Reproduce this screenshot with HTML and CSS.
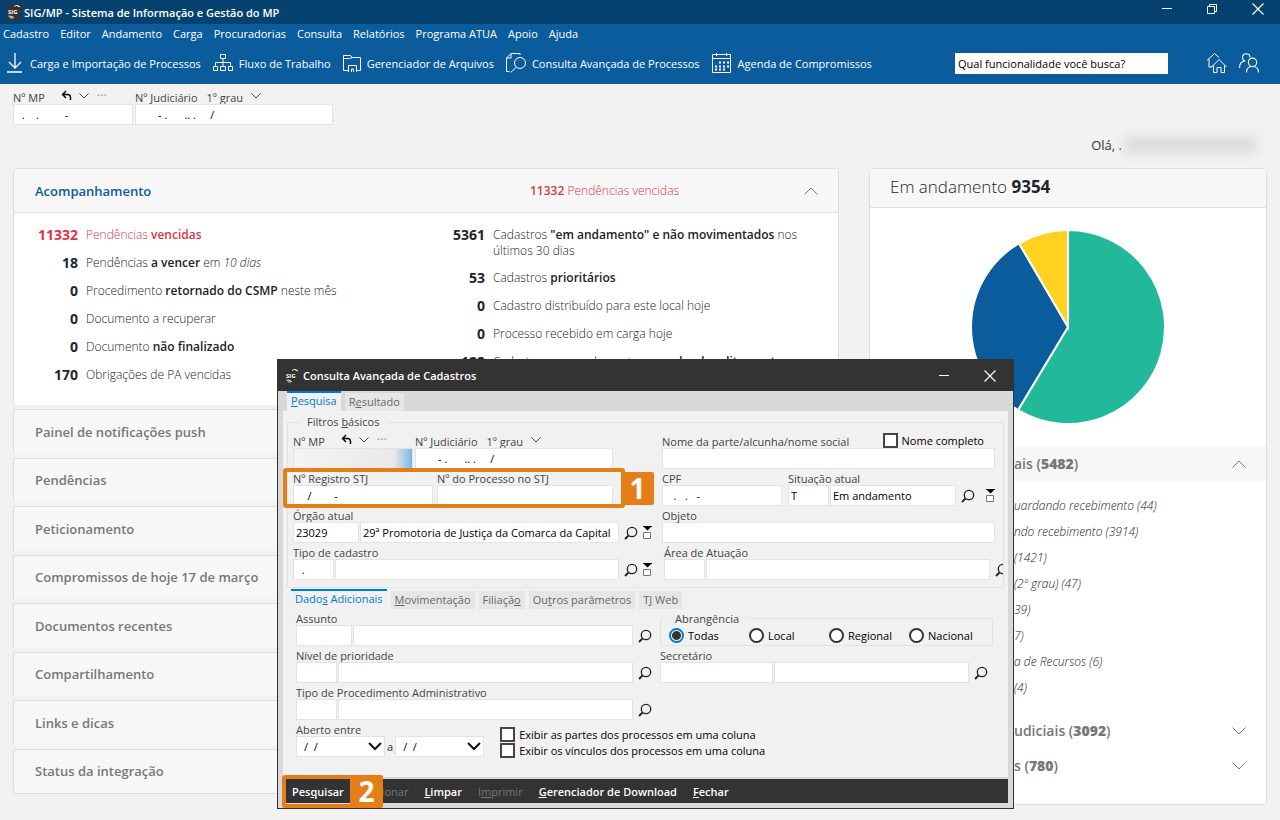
FILE: index.html
```html
<!DOCTYPE html>
<html lang="pt-BR">
<head>
    <meta charset="UTF-8">
    <meta name="viewport" content="width=device-width, initial-scale=1.0">
    <title>SIG/MP - Sistema de Informação e Gestão do MP</title>
    <link rel="stylesheet" href="styles.css">
</head>
<body>
    <svg class="sprite" aria-hidden="true">
        <symbol id="logo" viewBox="0 0 14 16">
            <text x="1" y="10" class="logo-text">SIG</text>
            <path d="M7 2.5c2-1.5 4.500-1.500 5.500.5M10 1.500l3 1.500M2 11.500c0 2.500 3 3.500 5 1.500M3 12l3 1" fill="none" stroke="#eee"/>
        </symbol>
        <symbol id="undo" viewBox="0 0 11 11">
            <path d="M5 1L1.500 4.500 5 8M1.500 4.500h5q3 0 3 3v2.500" fill="none" stroke="#000" stroke-width="1.400"/>
        </symbol>
        <symbol id="down" viewBox="0 0 10 6">
            <path d="M.5.5L5 5 9.500.5" fill="none" stroke="currentColor"/>
        </symbol>
        <symbol id="up" viewBox="0 0 14 8">
            <path d="M.5 7.500L7 1l6.500 6.500" fill="none" stroke="currentColor"/>
        </symbol>
        <symbol id="fold-down" viewBox="0 0 14 8">
            <path d="M.5.5L7 7l6.500-6.500" fill="none" stroke="currentColor"/>
        </symbol>
        <symbol id="combo" viewBox="0 0 14 9">
            <path d="M1 1l6 6 6-6" fill="none" stroke="#111" stroke-width="2"/>
        </symbol>
        <symbol id="lens" viewBox="0 0 14 14">
            <path d="M4.500 9.500L1 13" fill="none" stroke="#222" stroke-width="1.800"/>
            <circle cx="8" cy="6" r="4.700" fill="none" stroke="#222" stroke-width="1.300"/>
        </symbol>
        <symbol id="pick" viewBox="0 0 9 13">
            <path d="M0 0h9v1H8L4.500 4.500 1 1H0z" fill="#000"/>
            <path d="M.5 6.500h7v6h-7z" fill="#fff" stroke="#777"/>
        </symbol>
        <symbol id="close" viewBox="0 0 12 12">
            <path d="M.5.5l11 11M11.500.5l-11 11" fill="none" stroke="#fff" stroke-width="1.200"/>
        </symbol>
        <symbol id="minimize" viewBox="0 0 10 12">
            <path d="M0 5.500h10" stroke="#fff"/>
        </symbol>
    </svg>

    <header>
        <div class="titlebar">
            <svg class="app-logo" width="14" height="16"><use href="#logo"/></svg>
            <h1>SIG/MP - Sistema de Informação e Gestão do MP</h1>
            <button class="win-btn" aria-label="Minimizar"><svg width="10" height="12"><use href="#minimize"/></svg></button>
            <button class="win-btn" aria-label="Restaurar">
                <svg width="10" height="12" viewBox="0 0 10 12" fill="none" stroke="#fff"><path d="M.5 3.500h7v7h-7zM2.500 3.500v-2h7v7h-2"/></svg>
            </button>
            <button class="win-btn" aria-label="Fechar janela"><svg width="12" height="12"><use href="#close"/></svg></button>
        </div>
        <nav class="menu">
            <a href="#">Cadastro</a>
            <a href="#">Editor</a>
            <a href="#">Andamento</a>
            <a href="#">Carga</a>
            <a href="#">Procuradorias</a>
            <a href="#">Consulta</a>
            <a href="#">Relatórios</a>
            <a href="#">Programa ATUA</a>
            <a href="#">Apoio</a>
            <a href="#">Ajuda</a>
        </nav>
        <div class="toolbar">
            <button class="tool">
                <svg class="wide" width="16" height="20" viewBox="0 0 16 20" fill="none" stroke="#fff" stroke-width="1.300"><path d="M8 0v15M2 9l6 6 6-6M0 19h15"/></svg>
                Carga e Importação de Processos
            </button>
            <button class="tool">
                <svg width="20" height="18" viewBox="0 0 20 18" fill="none" stroke="#fff"><path d="M7.500.5h5v4h-5zM10 4.500v8M2.500 12V8.500h15V12M.5 12.500h4v4h-4zM7.500 12.500h5v4h-5zM15.500 12.500h4v4h-4z"/></svg>
                Fluxo de Trabalho
            </button>
            <button class="tool">
                <svg width="18" height="19" viewBox="0 0 18 19" fill="none" stroke="#fff"><path d="M5 16.500H.5V1.500h7l2 2h8v13H14M.5 4.500h6l3-1M5.500 18v-6.500h8V18M8.500 18v-3h2v3"/></svg>
                Gerenciador de Arquivos
            </button>
            <button class="tool">
                <svg width="20" height="20" viewBox="0 0 20 20" fill="none" stroke="#fff"><path d="M3.500 18.500h-3V5L5 .5h9V2M.5 5H5V.5M10 14.500L4.500 19.500"/><circle cx="14" cy="10" r="5.500"/></svg>
                Consulta Avançada de Processos
            </button>
            <button class="tool">
                <svg width="20" height="20" viewBox="0 0 20 20" fill="none" stroke="#fff"><path d="M.5 1.500h18v18H.5zM.5 5.500h18M4.500 0v3M14.500 0v3"/><path d="M7 9.500h10M3 13.500h14M3 16.500h10" stroke-width="2" stroke-dasharray="2 2"/></svg>
                Agenda de Compromissos
            </button>
            <input class="search" type="text" aria-label="Qual funcionalidade você busca?" value="Qual funcionalidade você busca?">
            <button class="tool" aria-label="Início">
                <svg width="20" height="20" viewBox="0 0 20 20" fill="none" stroke="#fff"><path d="M0 7.500L7.500.5l4.500 4M2 6v8h3M4.500 14l7.500-7.500 7.500 7.500M6.500 12.500v7h3.500v-5h4v5h3.500v-7"/></svg>
            </button>
            <button class="tool" aria-label="Usuários">
                <svg width="21" height="20" viewBox="0 0 21 20" fill="none" stroke="#fff" stroke-width="1.100"><path d="M.5 15c0-4 2-6.500 5-7C2 5.500 3.500.8 7 .8c2.500 0 4 1.700 4 3.700M7.500 19.500c0-4 2.500-6 6-6s6 2 6 6"/><circle cx="13.500" cy="9.300" r="4.200"/></svg>
            </button>
        </div>
    </header>

    <main>
        <div class="numbers">
            <div class="field w-mp">
                <div class="label">
                    <label for="top-mp">Nº MP</label>
                    <svg class="undo" width="11" height="11"><use href="#undo"/></svg>
                    <svg width="10" height="6"><use href="#down"/></svg>
                    <span class="dots">···</span>
                </div>
                <input id="top-mp" type="text" value="  .    .         -">
            </div>
            <div class="field w-jud">
                <div class="label">
                    <label for="top-jud">Nº Judiciário</label>
                    <span class="grau"><select aria-label="Grau"><option>1º grau</option></select><svg width="10" height="6"><use href="#down"/></svg></span>
                </div>
                <input id="top-jud" type="text" value="       - .      .. .     /">
            </div>
        </div>
        <p class="greeting">Olá, . <span class="redacted"></span></p>

        <div class="columns">
            <div class="left">
                <section class="panel follow">
                    <div class="panel-head">
                        <h2>Acompanhamento</h2>
                        <span class="overdue"><strong>11332</strong> Pendências vencidas</span>
                        <svg width="14" height="8"><use href="#up"/></svg>
                    </div>
                    <div class="stats">
                        <ul>
                            <li class="late"><b>11332</b><span>Pendências <strong>vencidas</strong></span></li>
                            <li><b>18</b><span>Pendências <strong>a vencer</strong> em <em>10 dias</em></span></li>
                            <li><b>0</b><span>Procedimento <strong>retornado do CSMP</strong> neste mês</span></li>
                            <li><b>0</b><span>Documento a recuperar</span></li>
                            <li><b>0</b><span>Documento <strong>não finalizado</strong></span></li>
                            <li><b>170</b><span>Obrigações de PA vencidas</span></li>
                        </ul>
                        <ul>
                            <li><b>5361</b><span>Cadastros <strong>"em andamento" e não movimentados</strong> nos últimos 30 dias</span></li>
                            <li><b>53</b><span>Cadastros <strong>prioritários</strong></span></li>
                            <li><b>0</b><span>Cadastro distribuído para este local hoje</span></li>
                            <li><b>0</b><span>Processo recebido em carga hoje</span></li>
                            <li><b>122</b><span>Cadastros sem andamento <strong>aguardando aditamento</strong></span></li>
                        </ul>
                    </div>
                </section>
                <a class="fold" href="#">Painel de notificações push</a>
                <a class="fold" href="#">Pendências</a>
                <a class="fold" href="#">Peticionamento</a>
                <a class="fold" href="#">Compromissos de hoje 17 de março</a>
                <a class="fold" href="#">Documentos recentes</a>
                <a class="fold" href="#">Compartilhamento</a>
                <a class="fold" href="#">Links e dicas</a>
                <a class="fold" href="#">Status da integração</a>
            </div>

            <section class="panel progress">
                <h2>Em andamento <b>9354</b></h2>
                <svg class="pie" width="194" height="194" viewBox="-97 -97 194 194" stroke="#fff" stroke-width="2">
                    <path d="M0 0V-97A97 97 0 1 1-50 83.100z" fill="#22b99b"/>
                    <path d="M0 0L-50 83.100A97 97 0 0 1-49 -83.700z" fill="#0b5c9d"/>
                    <path d="M0 0L-49 -83.700A97 97 0 0 1 0-97z" fill="#ffd220"/>
                </svg>
                <div class="group open"><h3>ais (<b>5482</b>)</h3><svg width="14" height="8"><use href="#up"/></svg></div>
                <ul class="places">
                    <li>uardando recebimento (44)</li>
                    <li>ndo recebimento (3914)</li>
                    <li>(1421)</li>
                    <li>(2º grau) (47)</li>
                    <li>39)</li>
                    <li>7)</li>
                    <li>a de Recursos (6)</li>
                    <li>(4)</li>
                </ul>
                <div class="group"><h3>udiciais (<b>3092</b>)</h3><svg width="14" height="8"><use href="#fold-down"/></svg></div>
                <div class="group"><h3>s (<b>780</b>)</h3><svg width="14" height="8"><use href="#fold-down"/></svg></div>
            </section>
        </div>
    </main>

    <form class="dialog" role="dialog" aria-labelledby="dialog-title">
        <div class="dialog-title">
            <svg width="14" height="16"><use href="#logo"/></svg>
            <h2 id="dialog-title">Consulta Avançada de Cadastros</h2>
            <button type="button" class="win-btn" aria-label="Minimizar consulta"><svg width="10" height="12"><use href="#minimize"/></svg></button>
            <button type="button" class="win-btn" aria-label="Fechar consulta"><svg width="12" height="12"><use href="#close"/></svg></button>
        </div>
        <div class="dialog-frame">
            <div class="tabs top-tabs">
                <button type="button" class="tab active"><u>P</u>esquisa</button>
                <button type="button" class="tab">R<u>e</u>sultado</button>
            </div>
            <div class="dialog-body">
                <fieldset class="basic">
                    <legend>Filtros <u>b</u>ásicos</legend>
                    <div class="filters">
                        <div class="row tight">
                            <div class="field w-mp">
                                <div class="label">
                                    <label for="mp">Nº MP</label>
                                    <svg class="undo" width="11" height="11"><use href="#undo"/></svg>
                                    <svg width="10" height="6"><use href="#down"/></svg>
                                    <span class="dots">···</span>
                                </div>
                                <input id="mp" class="masked" type="text">
                            </div>
                            <div class="field w-jud">
                                <div class="label">
                                    <label for="jud">Nº Judiciário</label>
                                    <span class="grau"><select aria-label="Grau do processo"><option>1º grau</option></select><svg width="10" height="6"><use href="#down"/></svg></span>
                                </div>
                                <input id="jud" type="text" value="       - .      .. .     /">
                            </div>
                        </div>
                        <div class="field">
                            <div class="label">
                                <label for="nome">Nome da parte/alcunha/nome social</label>
                                <label class="check full-name"><input type="checkbox">Nome completo</label>
                            </div>
                            <input id="nome" type="text">
                        </div>

                        <div class="row">
                            <div class="field w-stj">
                                <label class="label" for="reg">Nº Registro STJ</label>
                                <input id="reg" type="text" value="    /        -">
                            </div>
                            <div class="field w-proc">
                                <label class="label" for="proc">Nº do Processo no STJ</label>
                                <input id="proc" type="text">
                            </div>
                        </div>
                        <div class="row situation">
                            <div class="field w-mp">
                                <label class="label" for="cpf">CPF</label>
                                <input id="cpf" type="text" value="   .   .   -">
                            </div>
                            <div class="field grow">
                                <label class="label" for="sit">Situação atual</label>
                                <div class="inputs">
                                    <input id="sit" class="code" type="text" value="T">
                                    <input type="text" aria-label="Descrição da situação" value="Em andamento">
                                    <button type="button" class="icon" aria-label="Buscar situação"><svg width="14" height="14"><use href="#lens"/></svg></button>
                                    <button type="button" class="icon last" aria-label="Listar situações"><svg width="9" height="13"><use href="#pick"/></svg></button>
                                </div>
                            </div>
                        </div>

                        <div class="field">
                            <label class="label" for="orgao">Órgão atual</label>
                            <div class="inputs">
                                <input id="orgao" class="code-wide" type="text" value="23029">
                                <input type="text" aria-label="Nome do órgão" value="29ª Promotoria de Justiça da Comarca da Capital">
                                <button type="button" class="icon" aria-label="Buscar órgão"><svg width="14" height="14"><use href="#lens"/></svg></button>
                                <button type="button" class="icon" aria-label="Listar órgãos"><svg width="9" height="13"><use href="#pick"/></svg></button>
                            </div>
                        </div>
                        <div class="field">
                            <label class="label" for="objeto">Objeto</label>
                            <input id="objeto" type="text">
                        </div>

                        <div class="field">
                            <label class="label" for="tipo">Tipo de cadastro</label>
                            <div class="inputs">
                                <input id="tipo" class="code" type="text" value="  .">
                                <input type="text" aria-label="Descrição do tipo">
                                <button type="button" class="icon" aria-label="Buscar tipo"><svg width="14" height="14"><use href="#lens"/></svg></button>
                                <button type="button" class="icon" aria-label="Listar tipos"><svg width="9" height="13"><use href="#pick"/></svg></button>
                            </div>
                        </div>
                        <div class="field area">
                            <label class="label" for="area">Área de Atuação</label>
                            <div class="inputs">
                                <input id="area" class="code" type="text">
                                <input type="text" aria-label="Descrição da área">
                                <button type="button" class="icon cut" aria-label="Buscar área"><svg width="14" height="14"><use href="#lens"/></svg></button>
                            </div>
                        </div>
                    </div>
                </fieldset>

                <div class="tabs inner-tabs">
                    <button type="button" class="tab active">Dado<u>s</u> Adicionais</button>
                    <button type="button" class="tab"><u>M</u>ovimentação</button>
                    <button type="button" class="tab">Filiaçã<u>o</u></button>
                    <button type="button" class="tab">Ou<u>t</u>ros parâmetros</button>
                    <button type="button" class="tab">T<u>J</u> Web</button>
                </div>

                <div class="extra">
                    <div class="field">
                        <label class="label" for="assunto">Assunto</label>
                        <div class="inputs">
                            <input id="assunto" class="code-mid" type="text">
                            <input type="text" aria-label="Descrição do assunto">
                            <button type="button" class="icon" aria-label="Buscar assunto"><svg width="14" height="14"><use href="#lens"/></svg></button>
                        </div>
                    </div>
                    <fieldset class="scope">
                        <legend>Abrangência</legend>
                        <label><input type="radio" name="scope" checked>Todas</label>
                        <label><input type="radio" name="scope">Local</label>
                        <label><input type="radio" name="scope">Regional</label>
                        <label><input type="radio" name="scope">Nacional</label>
                    </fieldset>

                    <div class="field">
                        <label class="label" for="nivel">Nível de prioridade</label>
                        <div class="inputs">
                            <input id="nivel" class="code" type="text">
                            <input type="text" aria-label="Descrição da prioridade">
                            <button type="button" class="icon" aria-label="Buscar prioridade"><svg width="14" height="14"><use href="#lens"/></svg></button>
                        </div>
                    </div>
                    <div class="field">
                        <label class="label" for="secretario">Secretário</label>
                        <div class="inputs">
                            <input id="secretario" class="code-big" type="text">
                            <input type="text" aria-label="Nome do secretário">
                            <button type="button" class="icon" aria-label="Buscar secretário"><svg width="14" height="14"><use href="#lens"/></svg></button>
                        </div>
                    </div>

                    <div class="field">
                        <label class="label" for="procadm">Tipo de Procedimento Administrativo</label>
                        <div class="inputs">
                            <input id="procadm" class="code" type="text">
                            <input type="text" aria-label="Descrição do procedimento">
                            <button type="button" class="icon" aria-label="Buscar procedimento"><svg width="14" height="14"><use href="#lens"/></svg></button>
                        </div>
                    </div>

                    <div class="row dates">
                        <div class="field">
                            <label class="label" for="inicio">Aberto entre</label>
                            <div class="inputs range">
                                <span class="date"><select id="inicio"><option>/ &nbsp;/</option></select><svg width="14" height="9"><use href="#combo"/></svg></span>
                                <label for="fim">a</label>
                                <span class="date"><select id="fim"><option>/ &nbsp;/</option></select><svg width="14" height="9"><use href="#combo"/></svg></span>
                            </div>
                        </div>
                        <div class="options">
                            <label class="check"><input type="checkbox">Exibir as partes dos processos em uma coluna</label>
                            <label class="check"><input type="checkbox">Exibir os vínculos dos processos em uma coluna</label>
                        </div>
                    </div>
                </div>
            </div>
            <div class="actions">
                <button type="submit">Pes<u>q</u>uisar</button>
                <button type="button" disabled>A<u>d</u>icionar</button>
                <button type="button"><u>L</u>impar</button>
                <button type="button" disabled>I<u>m</u>primir</button>
                <button type="button"><u>G</u>erenciador de Download</button>
                <button type="button"><u>F</u>echar</button>
            </div>
        </div>

        <!-- numbered callouts -->
        <div class="callout step-1"><span>1</span></div>
        <div class="callout step-2"><span>2</span></div>
    </form>
</body>
</html>
```

FILE: styles.css
```css
* {
    box-sizing: border-box;
}
body {
    margin: 0;
    background-color: #f2f2f2;
    color: #333;
    font-family: "Open Sans", "Noto Sans", sans-serif;
    font-size: 11px;
}
h1, h2, h3, p, ul {
    margin: 0;
    padding: 0;
}
ul {
    list-style: none;
}
a {
    text-decoration: none;
}
button, input, select {
    font: inherit;
}
button {
    padding: 0;
    border: none;
    background: none;
    color: inherit;
}
svg {
    display: block;
    flex-shrink: 0;
}
.sprite {
    display: none;
}
.logo-text {
    fill: #fff;
    font-size: 6px;
    font-weight: bold;
}

/* application header */
header {
    background-color: #0b5c9d;
    color: #fff;
}
.titlebar {
    display: flex;
    align-items: center;
    height: 24px;
    padding: 0 16px 0 7px;
    background-color: #06426f;
}
.titlebar h1 {
    flex: 1;
    margin-left: 3px;
    font-size: 11px;
    font-weight: 600;
}
.app-logo {
    background-color: #333;
}
.win-btn {
    display: flex;
    margin-left: 35px;
}
.titlebar .win-btn {
    padding-bottom: 6px;
}
.menu {
    display: flex;
    gap: 11px;
    padding: 2px 3px;
    line-height: 16px;
}
.menu a {
    color: #fff;
}
.toolbar {
    display: flex;
    align-items: center;
    gap: 12px;
    height: 40px;
    padding: 0 20px 2px 7px;
}
.tool {
    display: flex;
    align-items: center;
    gap: 6px;
    white-space: nowrap;
}
.tool .wide {
    margin-right: 1px;
}
.search {
    width: 213px;
    height: 21px;
    margin-left: auto;
    margin-right: 27px;
    padding: 0 3px;
    border: none;
    background-color: #fff;
    color: #000;
}

/* number boxes */
main {
    padding: 7px 13px 16px;
}
.numbers {
    display: flex;
    gap: 2px;
}
.label {
    display: flex;
    align-items: center;
    height: 13px;
    line-height: 13px;
    color: #444;
    white-space: nowrap;
}
.label svg {
    margin-left: 7px;
    margin-bottom: 4px;
}
.label .undo {
    margin-left: 16px;
}
.dots {
    margin-left: 8px;
    margin-bottom: 4px;
    color: #999;
    font-size: 13px;
}
.grau {
    display: flex;
    align-items: center;
    margin-left: 9px;
}
.grau select {
    padding: 0;
    border: none;
    background: none;
    color: #444;
    appearance: none;
}
.field input[type="text"] {
    display: block;
    width: 100%;
    height: 21px;
    padding: 0 2px;
    border: 1px solid #e3e3e3;
    background-color: #fff;
    color: #000;
}
.w-mp {
    width: 120px;
}
.w-jud {
    width: 198px;
}
.w-stj {
    width: 140px;
}
.w-proc {
    width: 176px;
}

/* dashboard */
.greeting {
    display: flex;
    align-items: center;
    justify-content: flex-end;
    gap: 2px;
    height: 40px;
    padding-right: 11px;
    font-size: 13px;
}
.redacted {
    width: 132px;
    height: 16px;
    background-color: #dadada;
    filter: blur(6px);
}
.columns {
    display: grid;
    grid-template-columns: 826fr 398fr;
    gap: 30px;
    margin-top: 3px;
}
.left {
    display: flex;
    flex-direction: column;
    gap: 4px;
    padding-bottom: 11px;
}
.panel {
    border: 1px solid #ddd;
    border-radius: 4px;
    background-color: #fff;
}
.follow {
    height: 237px;
    border-bottom: none;
}
.panel-head {
    display: flex;
    align-items: center;
    height: 44px;
    padding: 0 20px 0 21px;
    border-bottom: 1px solid #e2dfdf;
    background-color: #f7f7f7;
    color: #777;
}
.panel-head h2 {
    width: 495px;
    color: #0b5c9d;
    font-size: 13px;
    font-weight: 600;
}
.panel-head svg {
    margin-left: auto;
}
.overdue, .stats, .places {
    font-size: 12px;
    font-weight: 300;
}
.overdue strong, .stats strong {
    font-weight: 600;
}
.overdue, .stats .late, .stats .late b {
    color: #dc3545;
}
.stats {
    display: grid;
    grid-template-columns: 407px 1fr;
    padding-top: 14px;
    color: #222;
}
.stats li {
    display: grid;
    grid-template-columns: 64px 1fr;
    gap: 8px;
    min-height: 17px;
    margin-bottom: 11px;
    padding-right: 40px;
    line-height: 16px;
}
.stats b {
    color: #212529;
    font-size: 14px;
    font-weight: 700;
    text-align: right;
}
.fold {
    display: flex;
    flex: 1;
    align-items: center;
    padding: 0 21px;
    border: 1px solid #ddd;
    border-bottom: none;
    background-color: #f7f7f7;
    color: #777;
    font-size: 13px;
    font-weight: 600;
}
.fold:last-child {
    border-bottom: 1px solid #ddd;
    border-radius: 0 0 4px 4px;
}
.progress {
    padding-bottom: 21px;
}
.progress h2 {
    height: 39px;
    padding-left: 20px;
    border-bottom: 1px solid #ddd;
    background-color: #f7f7f7;
    color: #212529;
    font-size: 17px;
    font-weight: 300;
    line-height: 36px;
}
.progress h2 b {
    font-weight: 700;
}
.pie {
    margin: 22px auto;
}
.group {
    display: flex;
    align-items: center;
    justify-content: space-between;
    height: 35px;
    padding: 0 20px 0 144px;
    color: #777;
}
.open {
    background-color: #f7f7f7;
}
.group h3 {
    font-size: 14px;
    font-weight: 600;
}
.group b {
    font-weight: 800;
}
.places {
    margin: 12px 0;
    padding-left: 144px;
    color: #222;
    font-style: italic;
    line-height: 26px;
}

/* advanced search window */
.dialog {
    position: absolute;
    top: 359px;
    left: 277px;
    width: 737px;
    border: 1px solid #333;
    background-color: #d8d8d8;
}
.dialog-title {
    display: flex;
    align-items: center;
    height: 31px;
    padding: 0 17px 0 7px;
    background-color: #333;
    color: #fff;
}
.dialog-title h2 {
    flex: 1;
    margin-left: 4px;
    font-size: 11px;
    font-weight: 600;
}
.dialog-frame {
    padding: 0 5px 5px;
}
.tabs {
    display: flex;
    align-items: flex-end;
    gap: 4px;
    height: 20px;
    padding: 0 4px;
}
.inner-tabs {
    margin-top: 1px;
    padding: 0 8px;
}
.tab {
    height: 18px;
    padding: 0 4px 2px;
    background-color: #e6e6e4;
    color: #666;
}
.tab.active {
    height: 20px;
    padding-bottom: 4px;
    border-top: 2px solid #0078d7;
    background-color: #f1f1f1;
    color: #0078d7;
}
.dialog-body {
    height: 366px;
    padding-top: 3px;
    background-color: #f1f1f1;
}
fieldset {
    min-width: 0;
    margin: 0;
    border: 1px solid #e3e3e3;
}
.basic {
    margin: 0 4px;
    padding: 5px 0 7px 5px;
}
legend {
    margin-left: 6px;
    padding: 0 8px;
    line-height: 16px;
    color: #444;
}
.filters {
    display: grid;
    grid-template-columns: 359px 1fr;
    gap: 3px 10px;
    padding-right: 8px;
}
.row {
    display: flex;
    gap: 4px;
}
.row.tight {
    gap: 2px;
}
.row.situation {
    gap: 6px;
}
.grow {
    flex: 1;
}
.inputs {
    display: flex;
    align-items: center;
    gap: 1px;
}
.field .inputs input {
    flex: 1;
    width: 0;
    min-width: 0;
}
.field .inputs .code {
    flex: none;
    width: 41px;
}
.field .inputs .code-mid {
    flex: none;
    width: 56px;
}
.field .inputs .code-wide {
    flex: none;
    width: 66px;
}
.field .inputs .code-big {
    flex: none;
    width: 113px;
}
.icon {
    flex: none;
    margin-left: 4px;
}
.icon.last {
    margin-left: 10px;
}
.icon.cut {
    width: 8px;
    overflow: hidden;
}
.area {
    margin-right: -8px;
    padding-left: 2px;
}
.field .masked {
    border-color: #0078d7;
    background-image: linear-gradient(to right, #f6f4f2, #e9e9e9 85%, #7ab5e8);
}
.check {
    display: flex;
    align-items: center;
    gap: 4px;
    height: 16px;
    color: #000;
}
.full-name {
    margin-left: auto;
    margin-right: 11px;
    margin-bottom: 3px;
}
input[type="checkbox"] {
    width: 15px;
    height: 15px;
    margin: 0;
    border: 2px solid #444;
    background-color: #fff;
    appearance: none;
}
input[type="radio"] {
    width: 15px;
    height: 15px;
    margin: 0;
    border: 2px solid #333;
    border-radius: 50%;
    background-color: #fff;
    appearance: none;
}
input[type="radio"]:checked {
    border-color: #0078d7;
    background: radial-gradient(circle, #333 4px, #fff 5px);
}
.extra {
    display: grid;
    grid-template-columns: 356px 1fr;
    gap: 3px 8px;
    padding: 3px 15px 0 13px;
}
.extra .field:nth-child(4) {
    padding-right: 5px;
}
.scope {
    display: grid;
    grid-template-columns: repeat(4, 80px);
    padding: 0 8px;
    height: 34px;
}
.scope legend {
    margin-left: -2px;
    line-height: 13px;
}
.scope label {
    display: flex;
    align-items: center;
    gap: 4px;
    color: #000;
}
.dates {
    grid-column: 1 / -1;
    gap: 16px;
}
.range {
    gap: 2px;
}
.date {
    display: grid;
    align-items: center;
}
.date select, .date svg {
    grid-area: 1 / 1;
}
.date select {
    width: 89px;
    height: 21px;
    padding: 0 7px;
    border: 1px solid #e3e3e3;
    background-color: #fff;
    color: #000;
    appearance: none;
}
.date svg {
    justify-self: end;
    margin-right: 3px;
    pointer-events: none;
}
.options {
    padding-top: 3px;
}
.actions {
    display: flex;
    align-items: center;
    gap: 16px;
    height: 24px;
    margin-top: 2px;
    padding: 0 9px;
    background-color: #333;
    color: #fff;
    font-weight: 600;
}
.actions button:disabled {
    color: #777;
    font-weight: 400;
}

/* callouts lie over the window */
.callout {
    position: absolute;
    border: 4px solid #e67e17;
    border-radius: 3px;
    pointer-events: none;
}
.callout span {
    position: absolute;
    left: 100%;
    width: 33px;
    height: 33px;
    border-radius: 2px;
    background-color: #e67e17;
    color: #fff;
    font-size: 28px;
    font-weight: 700;
    line-height: 33px;
    text-align: center;
}
.step-1 {
    top: 108px;
    left: 5px;
    width: 342px;
    height: 40px;
}
.step-1 span {
    top: 0;
}
.step-2 {
    top: 415px;
    left: 4px;
    width: 72px;
    height: 33px;
}
.step-2 span {
    top: -4px;
}
```
